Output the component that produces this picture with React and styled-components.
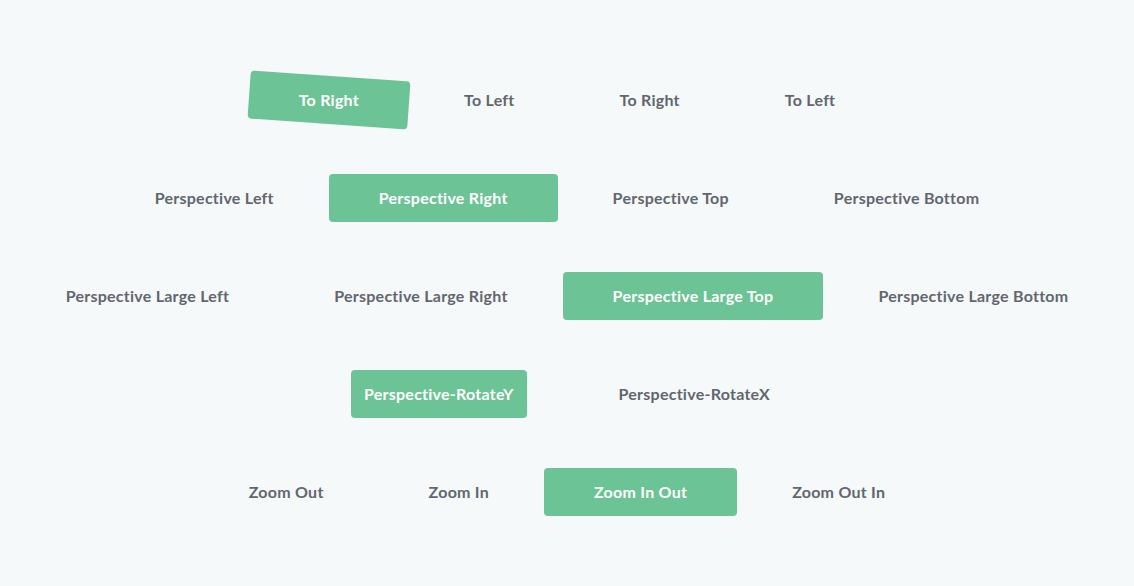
import React from "react";
import styled, { createGlobalStyle } from "styled-components";

const Global = createGlobalStyle`
  html, body {
    margin: 0;
    padding: 0;
    background: #f5f9f9;
  }
  body {
    font-family: Lato, "Open Sans", "Liberation Sans", sans-serif;
  }
`;

const Page = styled.div`
  width: 1134px;
  min-height: 586px;
  box-sizing: border-box;
  padding-top: 76px;
  display: flex;
  flex-direction: column;
  gap: 50px;
  background: #f5f9f9;
`;

const Row = styled.div`
  display: flex;
  justify-content: center;
  align-items: center;
  gap: ${(p) => p.$gap || 5}px;
`;

const Btn = styled.button`
  position: relative;
  z-index: 0;
  height: 48px;
  padding: 0 ${(p) => (p.$pad != null ? p.$pad : 50)}px 2px;
  border: none;
  border-radius: 4px;
  font-family: inherit;
  font-size: 16px;
  letter-spacing: 0.25px;
  font-weight: 700;
  white-space: nowrap;
  cursor: pointer;
  background: ${(p) => (p.$active && !p.$rotate ? "#6cc395" : "transparent")};
  color: ${(p) => (p.$active ? "#ffffff" : "#62666e")};

  &::before {
    content: "";
    display: ${(p) => (p.$rotate ? "block" : "none")};
    position: absolute;
    inset: 0;
    z-index: -1;
    border-radius: 4px;
    background: #6cc395;
    transform: rotate(${(p) => p.$rotate || 0}deg);
  }
`;

const rows = [
  { items: [["To Right", true, 4], ["To Left"], ["To Right"], ["To Left"]] },
  { items: [["Perspective Left"], ["Perspective Right", true], ["Perspective Top"], ["Perspective Bottom"]] },
  {
    items: [
      ["Perspective Large Left"],
      ["Perspective Large Right"],
      ["Perspective Large Top", true],
      ["Perspective Large Bottom"],
    ],
  },
  { gap: 79, pad: 13, items: [["Perspective-RotateY", true], ["Perspective-RotateX"]] },
  { items: [["Zoom Out"], ["Zoom In"], ["Zoom In Out", true], ["Zoom Out In"]] },
];

export default function App() {
  return (
    <>
      <Global />
      <Page>
        {rows.map((r, i) => (
          <Row key={i} $gap={r.gap}>
            {r.items.map(([label, active, rot], j) => (
              <Btn key={j} $active={active} $rotate={rot} $pad={r.pad}>
                {label}
              </Btn>
            ))}
          </Row>
        ))}
      </Page>
    </>
  );
}
